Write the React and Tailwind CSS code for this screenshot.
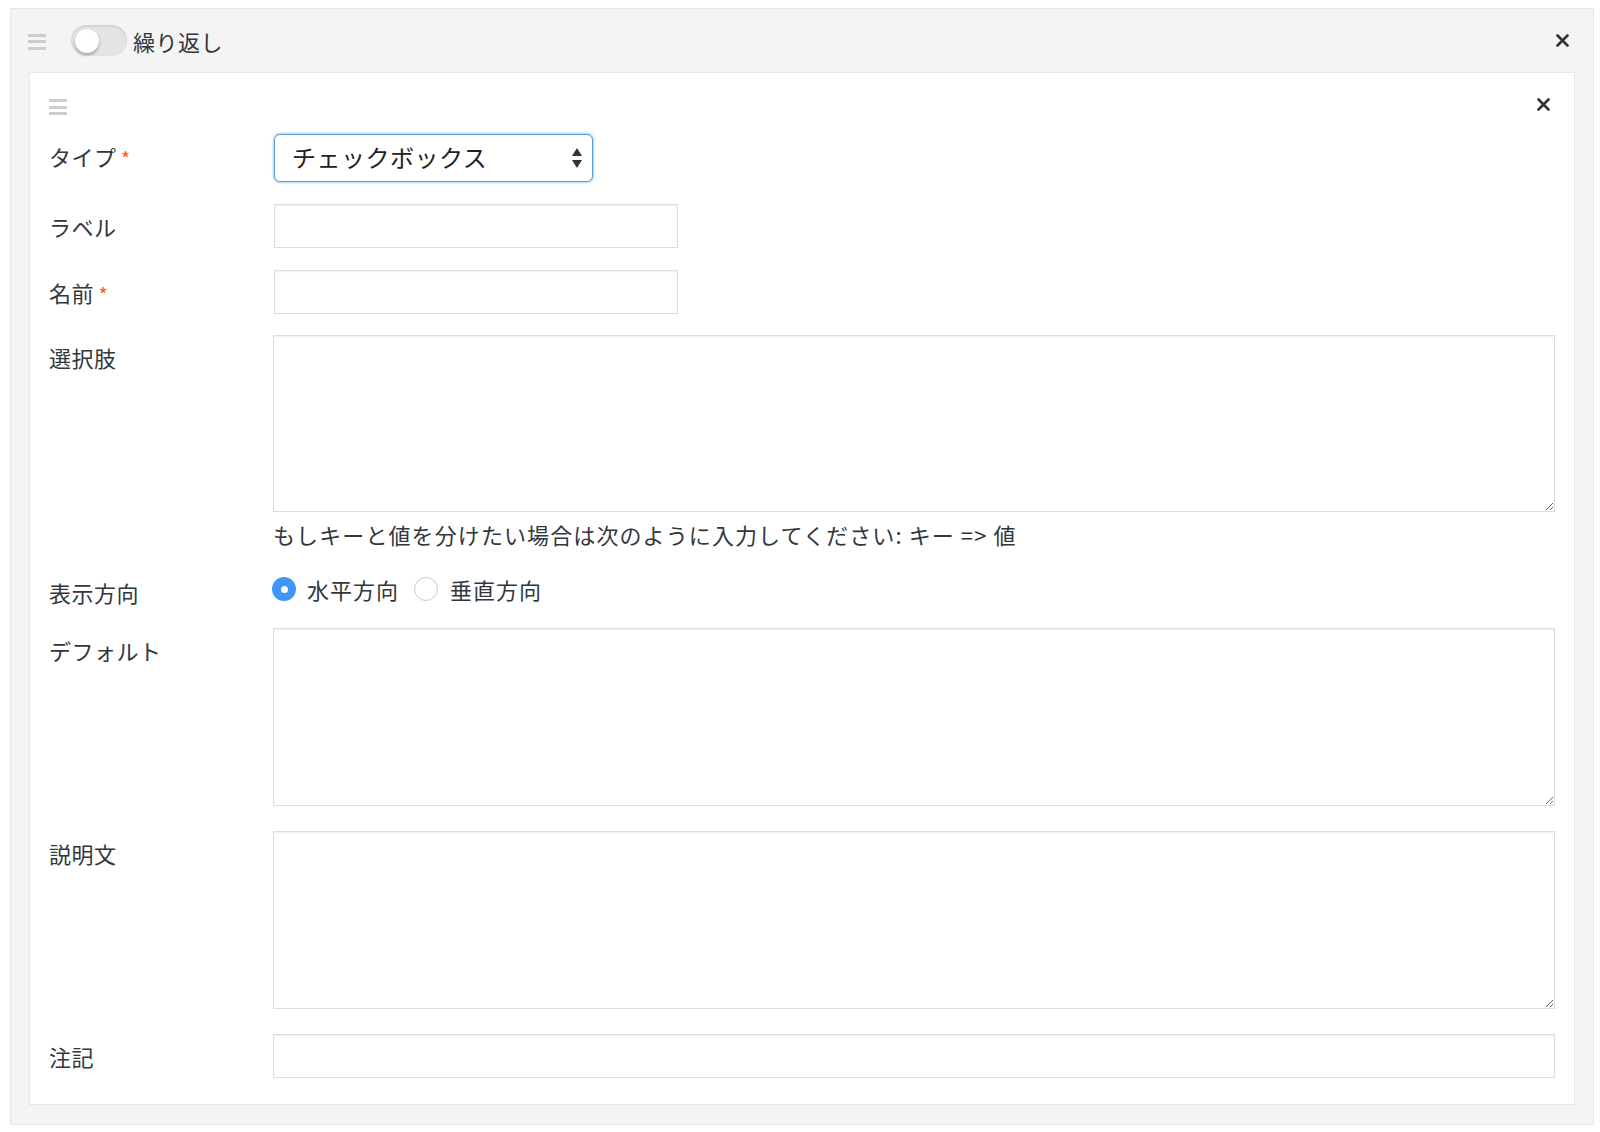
import { useState } from 'react'

function Handle() {
  return (
    <div className="flex h-[18px] w-[18px] flex-col justify-between py-[1px]">
      <span className="block h-[3px] w-full bg-[#cccccc]" />
      <span className="block h-[3px] w-full bg-[#cccccc]" />
      <span className="block h-[3px] w-full bg-[#cccccc]" />
    </div>
  )
}

function CloseIcon() {
  return (
    <svg width="13" height="13" viewBox="0 0 13 13" className="block">
      <path d="M1.5 1.5 L11.5 11.5 M11.5 1.5 L1.5 11.5" stroke="#333" strokeWidth="2.6" strokeLinecap="round" />
    </svg>
  )
}

function Required() {
  return <span className="relative -top-[2px] ml-[5px] text-[16px] font-bold text-[#f56e28]">*</span>
}

function Row({ label, required, children, className = '' }) {
  return (
    <div className={`flex items-start ${className}`}>
      <div className="w-[224px] shrink-0 pt-[10px] text-[22px] leading-[24px] tracking-[0.5px] text-[#32373c]">
        {label}
        {required && <Required />}
      </div>
      <div className="min-w-0 flex-1">{children}</div>
    </div>
  )
}

const inputCls =
  'block h-[44px] border border-[#dcdcdc] bg-white shadow-[inset_0_1px_2px_rgba(0,0,0,0.07)] outline-none'
const areaCls =
  'block h-[178px] w-full border border-[#dcdcdc] bg-white shadow-[inset_0_1px_2px_rgba(0,0,0,0.07)] outline-none'

function Radio({ checked, onClick, className = '' }) {
  return (
    <button
      onClick={onClick}
      className={`flex h-[24px] w-[24px] items-center justify-center rounded-full ${
        checked ? 'bg-[#3e97f6]' : 'border border-[#c8c8c8] bg-white'
      } ${className}`}
    >
      {checked && <span className="block h-[7px] w-[7px] rounded-full bg-white" />}
    </button>
  )
}

export default function App() {
  const [dir, setDir] = useState('h')

  return (
    <div className="min-h-screen bg-white pl-[10px] pt-[8px] font-['Noto_Sans_CJK_JP','Liberation_Sans',sans-serif] text-[#32373c]">
      <div className="w-[1584px] border border-[#e6e6e6] bg-[#f4f4f4]">
        <div className="flex h-[63px] items-center pl-[17px] pr-[24px]">
          <div className="mt-[2px]">
            <Handle />
          </div>
          <div className="ml-[25px] flex h-[31px] w-[56px] items-center rounded-full bg-[#e4e4e4] pl-[4px] shadow-[inset_0_1px_3px_rgba(0,0,0,0.12)]">
            <span className="block h-[24px] w-[24px] rounded-full bg-white shadow-[0_2px_3px_rgba(0,0,0,0.3)]" />
          </div>
          <span className="ml-[6px] text-[22px] leading-[28px] tracking-[0.5px] text-[#32373c]">繰り返し</span>
          <div className="ml-auto">
            <CloseIcon />
          </div>
        </div>

        <div className="mx-[18px] mb-[19px] border border-[#e6e6e6] bg-white px-[19px] pb-[26px]">
          <div className="flex items-start justify-between pt-[25px]">
            <Handle />
            <div className="mr-[5px]">
              <CloseIcon />
            </div>
          </div>

          <Row label="タイプ" required className="mt-[18px]">
            <div className="ml-[1px] flex h-[48px] w-[319px] items-center justify-between rounded-[6px] border border-[#5b9dd9] bg-white pl-[17px] pr-[10px] shadow-[0_0_3px_rgba(30,140,190,0.8)]">
              <span className="-mt-[2px] text-[24px] leading-[30px] tracking-[0.5px] text-[#222]">チェックボックス</span>
              <svg width="10" height="20" viewBox="0 0 10 20" className="block">
                <path d="M5 0 L10 8 L0 8 Z M5 20 L10 12 L0 12 Z" fill="#333" />
              </svg>
            </div>
          </Row>

          <Row label="ラベル" className="mt-[22px]">
            <input type="text" className={`${inputCls} ml-[1px] w-[404px]`} />
          </Row>

          <Row label="名前" required className="mt-[22px]">
            <input type="text" className={`${inputCls} ml-[1px] w-[404px]`} />
          </Row>

          <Row label="選択肢" className="mt-[21px]">
            <textarea className={`${areaCls} !h-[177px]`} />
            <p className="mt-[10px] text-[22px] leading-[24px] tracking-[1.1px] text-[#32373c]">
              もしキーと値を分けたい場合は次のように入力してください: キー =&gt; 値
            </p>
          </Row>

          <div className="mt-[30px] flex items-start">
            <div className="w-[224px] shrink-0 pt-[3px] text-[22px] leading-[26px] tracking-[0.5px]">表示方向</div>
            <div className="-ml-[1px] flex h-[26px] items-center text-[22px] tracking-[1px]">
              <Radio checked={dir === 'h'} onClick={() => setDir('h')} />
              <span className="ml-[11px] leading-[26px]">水平方向</span>
              <Radio checked={dir === 'v'} onClick={() => setDir('v')} className="ml-[15px]" />
              <span className="ml-[12px] leading-[26px]">垂直方向</span>
            </div>
          </div>

          <Row label="デフォルト" className="mt-[23px]">
            <textarea className={areaCls} />
          </Row>

          <Row label="説明文" className="mt-[25px]">
            <textarea className={areaCls} />
          </Row>

          <Row label="注記" className="mt-[25px]">
            <input type="text" className={`${inputCls} w-full`} />
          </Row>
        </div>
      </div>
    </div>
  )
}
